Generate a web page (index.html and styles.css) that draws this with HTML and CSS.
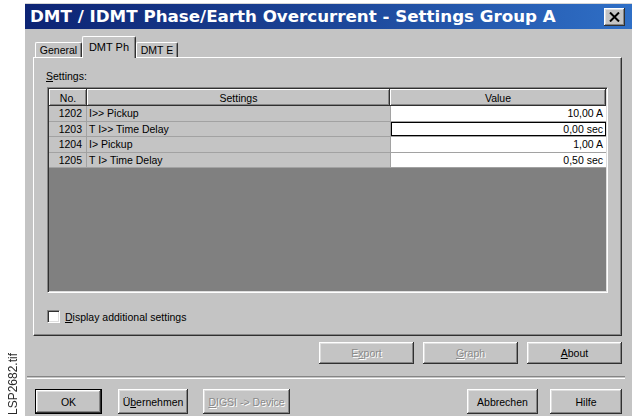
FILE: index.html
```html
<!DOCTYPE html>
<html lang="de">
<head>
<meta charset="utf-8">
<title>Settings Group A</title>
<link rel="stylesheet" href="styles.css">
</head>
<body>
<div class="page">
  <div class="side"><span class="filename">LSP2682.tif</span></div>

  <div class="dialog">
    <div class="titlebar">
      <span class="title">DMT / IDMT Phase/Earth Overcurrent - Settings Group A</span>
      <span class="close">
        <svg width="11" height="10" viewBox="0 0 11 10"><path d="M1 0.5 L10 9.5 M10 0.5 L1 9.5" stroke="#000" stroke-width="2" fill="none"/></svg>
      </span>
    </div>

    <div class="tabs">
      <div class="tab tab-general">General</div>
      <div class="tab tab-active">DMT Ph</div>
      <div class="tab tab-e">DMT E</div>
    </div>

    <div class="panel">
      <div class="label"><u>S</u>ettings:</div>
      <div class="table">
        <div class="grid">
          <div class="th">No.</div>
          <div class="th">Settings</div>
          <div class="th">Value</div>

          <div class="td no">1202</div>
          <div class="td name">I&gt;&gt; Pickup</div>
          <div class="td val">10,00 A</div>

          <div class="td no">1203</div>
          <div class="td name">T I&gt;&gt; Time Delay</div>
          <div class="td val focus">0,00 sec</div>

          <div class="td no">1204</div>
          <div class="td name">I&gt; Pickup</div>
          <div class="td val">1,00 A</div>

          <div class="td no">1205</div>
          <div class="td name">T I&gt; Time Delay</div>
          <div class="td val">0,50 sec</div>
        </div>
      </div>
      <div class="check"><span class="box"></span><span><u>D</u>isplay additional settings</span></div>
    </div>

    <div class="tools">
      <div class="btn btn-tool disabled">E<u>x</u>port</div>
      <div class="btn btn-tool disabled"><u>G</u>raph</div>
      <div class="btn btn-tool"><u>A</u>bout</div>
    </div>

    <div class="sep"></div>

    <div class="footer">
      <div class="btn btn-ok">OK</div>
      <div class="btn btn-apply">Ü<u>b</u>ernehmen</div>
      <div class="btn btn-digsi disabled"><u>D</u>IGSI -&gt; Device</div>
      <div class="spacer"></div>
      <div class="btn btn-cancel">Abbrechen</div>
      <div class="btn btn-help">Hilfe</div>
    </div>
  </div>
</div>
</body>
</html>
```

FILE: styles.css
```css
html, body {
  margin: 0;
  padding: 0;
  background: #fff;
}

.page {
  width: 632px;
  height: 416px;
  overflow: hidden;
  display: flex;
  font-family: "Liberation Sans", Arial, sans-serif;
  font-size: 10.5px;
  color: #000;
}

/* file name printed sideways in the margin */
.side {
  width: 25px;
  flex: none;
  display: flex;
  flex-direction: column;
  justify-content: flex-end;
  align-items: center;
  padding-bottom: 1px;
}
.filename {
  writing-mode: vertical-rl;
  transform: rotate(180deg);
  font-size: 12px;
  color: #2a2a2a;
  line-height: 12px;
}

/* window */
.dialog {
  flex: 1;
  margin-top: 3px;
  border-top: 1px solid #d6d6d6;
  background: #c4c4c4;
  display: flex;
  flex-direction: column;
}

.titlebar {
  height: 25px;
  flex: none;
  display: flex;
  align-items: center;
  background: linear-gradient(to right, #0d2474 0%, #1a4193 45%, #2f6fc6 100%);
}
.title {
  padding-left: 5px;
  color: #fff;
  font-family: "DejaVu Sans", Verdana, sans-serif;
  font-weight: bold;
  font-size: 16.7px;
  line-height: 25px;
  white-space: nowrap;
}
.close {
  margin-left: auto;
  margin-right: 7px;
  width: 21px;
  height: 18px;
  background: #c4c4c4;
  display: flex;
  align-items: center;
  justify-content: center;
  box-shadow: inset -1px -1px #303030, inset 1px 1px #fff, inset -2px -2px #858585, inset 2px 2px #dedede;
}

/* tab strip */
.tabs {
  height: 20px;
  padding-top: 8px;
  margin-left: 10px;
  display: flex;
  align-items: flex-end;
  position: relative;
  z-index: 1;
}
.tab {
  height: 14px;
  display: flex;
  align-items: center;
  justify-content: center;
  background: #c4c4c4;
  border-top: 1px solid #fff;
  border-left: 1px solid #fff;
  border-right: 1px solid #303030;
  border-radius: 2px 2px 0 0;
  box-shadow: inset -1px 0 #858585;
}
.tab-general { width: 45px; }
.tab-e { width: 40px; }
.tab-active {
  width: 52px;
  height: 19px;
  margin-bottom: -1px;
  padding-bottom: 2px;
  font-size: 11px;
}

/* tab page */
.panel {
  margin: 0 10px 0 8px;
  height: 277px;
  border-top: 1px solid #fff;
  border-left: 1px solid #fff;
  border-right: 1px solid #303030;
  border-bottom: 1px solid #303030;
  box-shadow: inset -1px -1px #858585;
  padding: 0 13px;
  display: flex;
  flex-direction: column;
}
.label {
  margin-top: 11px;
  height: 14px;
  line-height: 14px;
  margin-left: -1px;
}
.table {
  margin-top: 4px;
  height: 202px;
  background: #808080;
  border-top: 1px solid #858585;
  border-left: 1px solid #858585;
  border-right: 1px solid #fff;
  border-bottom: 1px solid #fff;
  box-shadow: inset 1px 1px #303030, inset -1px -1px #dedede;
  padding: 1px;
}
.grid {
  display: grid;
  grid-template-columns: 38px 303px 1fr;
  grid-auto-rows: 15.5px;
  grid-template-rows: 17px;
}
.th {
  background: #c4c4c4;
  display: flex;
  align-items: center;
  justify-content: center;
  box-shadow: inset -1px -1px #303030, inset 1px 1px #fff, inset -2px -2px #858585;
}
.td {
  display: flex;
  align-items: center;
  white-space: nowrap;
  border-bottom: 1px solid #a2a2a2;
  box-sizing: border-box;
}
.no {
  background: #c4c4c4;
  justify-content: flex-end;
  padding-right: 4px;
  border-right: 1px solid #a2a2a2;
}
.name {
  background: #c4c4c4;
  padding-left: 2px;
}
.val {
  background: #fff;
  justify-content: flex-end;
  padding-right: 3px;
  border-left: 1px solid #a2a2a2;
}
.val.focus {
  box-shadow: inset 0 0 0 1px #000;
}

.check {
  margin-top: 17px;
  display: flex;
  align-items: center;
  gap: 5px;
  height: 13px;
}
.box {
  width: 13px;
  height: 13px;
  box-sizing: border-box;
  background: #fff;
  border-top: 1px solid #858585;
  border-left: 1px solid #858585;
  border-right: 1px solid #fff;
  border-bottom: 1px solid #fff;
  box-shadow: inset 1px 1px #303030, inset -1px -1px #dedede;
}

/* buttons */
.btn {
  box-sizing: border-box;
  display: flex;
  align-items: center;
  justify-content: center;
  background: #c4c4c4;
  white-space: nowrap;
  box-shadow: inset -1px -1px #303030, inset 1px 1px #fff, inset -2px -2px #858585, inset 2px 2px #dedede;
}
.btn.disabled {
  color: #8a8a8a;
  text-shadow: 1px 1px #fff;
}

.tools {
  margin: 6px 10px 0 0;
  display: flex;
  justify-content: flex-end;
  gap: 9px;
}
.btn-tool {
  width: 95px;
  height: 22px;
}

.sep {
  margin: 12px 7px 0 2px;
  height: 1px;
  border-top: 1px solid #858585;
  border-bottom: 1px solid #fff;
}

.footer {
  margin: 10px 10px 0 10px;
  display: flex;
}
.footer .btn {
  height: 25px;
}
.spacer { flex: 1; }
.btn-ok {
  width: 67px;
  border: 1px solid #000;
}
.btn-apply {
  width: 70px;
  margin-left: 16px;
}
.btn-digsi {
  width: 87px;
  margin-left: 15px;
}
.btn-cancel { width: 71px; }
.btn-help {
  width: 72px;
  margin-left: 12px;
}
```
